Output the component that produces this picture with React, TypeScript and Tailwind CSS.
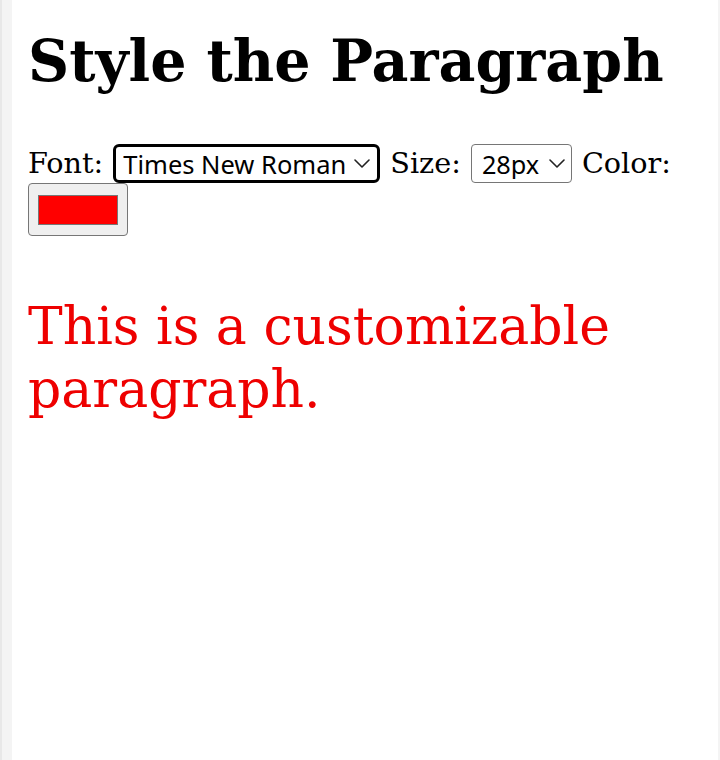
import React, { useState } from 'react';

const fonts = ['Times New Roman', 'Arial', 'Courier New', 'Georgia', 'Verdana'];
const sizes = ['16px', '20px', '24px', '28px', '32px'];

const Chevron = () => (
  <svg width="16" height="9" viewBox="0 0 16 9" fill="none" className="shrink-0">
    <path d="M1 1l7 7 7-7" stroke="#222" strokeWidth="1.6" strokeLinecap="round" strokeLinejoin="round" />
  </svg>
);

const App: React.FC = () => {
  const [font, setFont] = useState('Times New Roman');
  const [size, setSize] = useState('28px');
  const [color, setColor] = useState('#ff0000');

  return (
    <div className="flex h-[760px] bg-[#f4f4f4] border-l-2 border-[#e8e8e8] pl-[10px] pr-[2px]">
      <div className="flex-1 bg-white px-4 pt-[21px] font-['DejaVu_Serif',serif] text-black">
        <h1 className="text-[57px] leading-[80px] font-bold whitespace-nowrap">Style the Paragraph</h1>

        {/* Controls */}
        <div className="mt-[43px] flex flex-wrap items-center gap-x-[10px] text-[28.7px] leading-[39px]">
          <span>Font:</span>
          <label className="flex items-center justify-between w-[267px] h-[39px] border-[3px] border-black rounded-[6px] pl-[7px] pr-[7px]">
            <select
              value={font}
              onChange={(e) => setFont(e.target.value)}
              className="appearance-none bg-transparent outline-none font-['Noto_Sans',sans-serif] text-[25.5px] leading-[30px]"
            >
              {fonts.map(f => <option key={f} value={f}>{f}</option>)}
            </select>
            <Chevron />
          </label>
          <span>Size:</span>
          <label className="flex items-center justify-between w-[101px] h-[39px] border border-[#767676] rounded-[4px] pl-[10px] pr-[6px]">
            <select
              value={size}
              onChange={(e) => setSize(e.target.value)}
              className="appearance-none bg-transparent outline-none font-['Noto_Sans',sans-serif] text-[25.3px] leading-[30px]"
            >
              {sizes.map(s => <option key={s} value={s}>{s}</option>)}
            </select>
            <Chevron />
          </label>
          <span>Color:</span>
          <label className="flex items-center justify-center w-[100px] h-[53px] bg-[#efefef] border border-[#767676] rounded-[4px]">
            <span className="block w-[80px] h-[30px] border border-[#777] bg-[#ff0000]" />
            <input type="color" value={color} onChange={(e) => setColor(e.target.value)} className="hidden" />
          </label>
        </div>

        <p className="mt-[59px] text-[#ee0000] text-[52px] leading-[63px]">
          This is a customizable paragraph.
        </p>
      </div>
    </div>
  );
};

export default App;
